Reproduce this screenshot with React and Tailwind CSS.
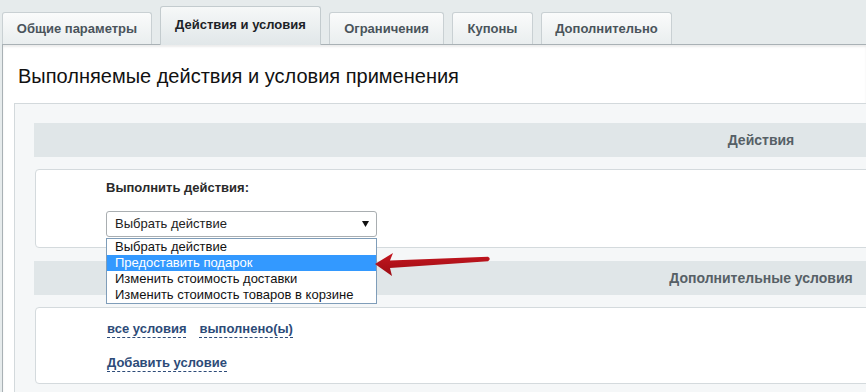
import React from "react";

const tabs = [
  { label: "Общие параметры", w: "w-[150px]", active: false },
  { label: "Действия и условия", w: "w-[161px]", active: true },
  { label: "Ограничения", w: "w-[115px]", active: false },
  { label: "Купоны", w: "w-[81px]", active: false },
  { label: "Дополнительно", w: "w-[131px]", active: false },
];

const options = [
  "Выбрать действие",
  "Предоставить подарок",
  "Изменить стоимость доставки",
  "Изменить стоимость товаров в корзине",
];

export default function App() {
  return (
    <div className="relative w-[866px] h-[392px] overflow-hidden bg-[#e6ebec] font-['Liberation_Sans',Arial,sans-serif]">
      {/* Tabs */}
      <div className="flex items-end gap-2 pl-[2px] h-[44px]">
        {tabs.map((t) =>
          t.active ? (
            <div
              key={t.label}
              className={`${t.w} h-[39px] -mb-[1px] relative z-10 flex items-center justify-center rounded-t-[3px] border border-b-0 border-[#c3cbce] bg-gradient-to-b from-[#f6f8f8] to-[#e1e7e9] text-[13px] font-bold text-[#1c2227] pb-[2px]`}
            >
              {t.label}
            </div>
          ) : (
            <div
              key={t.label}
              className={`${t.w} h-[32px] flex items-center justify-center rounded-t-[3px] border border-b-0 border-[#c9d0d3] bg-gradient-to-b from-[#fafbfb] to-[#eaeeef] text-[13px] font-bold text-[#4a545b]`}
            >
              {t.label}
            </div>
          )
        )}
      </div>

      {/* Panel */}
      <div className="ml-[2px] border-t border-l border-[#a9b1b5] bg-white h-[348px] shadow-[inset_0_2px_2px_rgba(0,0,0,0.08)]">
        <div className="h-[58px] pt-[19px] pl-[15px] text-[20px] leading-[24px] text-[#111]">
          Выполняемые действия и условия применения
        </div>
        <div className="ml-[11px] w-[1500px] h-[300px] border-t border-l border-[#d3d9dc] bg-[#f5f7f8] pl-[19px] pt-[19px]">
          {/* Header 1 */}
          <div className="w-[1454px] h-[34px] bg-[#e0e6e8] flex items-center justify-center text-[14px] font-bold text-[#566066]">
            Действия
          </div>
          {/* Card 1 */}
          <div className="relative z-20 mt-[12px] ml-[1px] h-[79px] rounded-[4px] border border-[#d4dadd] bg-white pl-[70px] pt-[10px]">
            <div className="text-[13px] leading-[16px] font-bold text-[#2a2a2a]">
              Выполнить действия:
            </div>
            <div className="relative mt-[15px] w-[271px]">
              <div className="h-[26px] w-[271px] rounded-[3px] border border-[#a9aeb1] bg-white flex items-center justify-between pl-[8px] pr-[7px] text-[13px] text-[#222]">
                <span>Выбрать действие</span>
                <svg width="7" height="6" viewBox="0 0 7 6">
                  <path d="M0 0 L7 0 L3.5 6 Z" fill="#111" />
                </svg>
              </div>
              <div className="absolute left-0 top-[27px] w-[271px] border border-[#7f9db9] bg-white">
                {options.map((o, i) => (
                  <div
                    key={o}
                    className={`h-[16px] leading-[16px] pl-[8px] text-[13px] whitespace-nowrap ${
                      i === 1 ? "bg-[#3399ff] text-white" : "text-[#111]"
                    }`}
                  >
                    {o}
                  </div>
                ))}
              </div>
            </div>
          </div>
          {/* Header 2 */}
          <div className="mt-[13px] w-[1454px] h-[34px] bg-[#e0e6e8] flex items-center justify-center text-[14px] font-bold text-[#566066]">
            Дополнительные условия
          </div>
          {/* Card 2 */}
          <div className="mt-[12px] ml-[1px] h-[77px] rounded-[4px] border border-[#d4dadd] bg-white pl-[71px] pt-[13px]">
            <div className="flex gap-[13px] text-[13px] font-bold text-[#2d4b78]">
              <span className="leading-[16px] border-b border-dashed border-[#2d4b78]">все условия</span>
              <span className="leading-[16px] border-b border-dashed border-[#2d4b78]">выполнено(ы)</span>
            </div>
            <div className="mt-[17px] flex text-[13px] font-bold text-[#2d4b78]">
              <span className="leading-[16px] border-b border-dashed border-[#2d4b78]">Добавить условие</span>
            </div>
          </div>
        </div>
      </div>

      {/* Red arrow annotation */}
      <svg
        className="absolute left-[370px] top-[248px] z-30"
        width="126"
        height="30"
        viewBox="0 0 126 30"
      >
        <defs>
          <linearGradient id="ar" x1="0" y1="0" x2="0" y2="1">
            <stop offset="0" stopColor="#c4161f" />
            <stop offset="1" stopColor="#9c0d14" />
          </linearGradient>
        </defs>
        <path
          d="M5 16 L23 5 L20 12.5 L118 8.8 Q121.5 11 118 13.2 L20 20 L22 28 Z"
          fill="url(#ar)"
        />
      </svg>
    </div>
  );
}
